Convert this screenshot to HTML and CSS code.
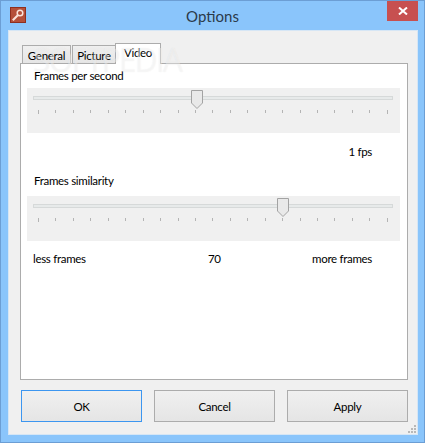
FILE: index.html
```html
<!DOCTYPE html>
<html lang="en">
<head>
  <meta charset="UTF-8" />
  <title>Options</title>
  <link rel="stylesheet" href="styles.css">
</head>
<body>
  <div class="window">
    <div class="titlebar">
      <svg class="app-icon" width="16" height="16" viewBox="0 0 16 16">
        <rect x="0.5" y="0.5" width="15" height="15" fill="#b5503a" stroke="#8f2f1f" />
        <circle cx="10" cy="6" r="2.8" fill="none" stroke="#fbe3da" stroke-width="1.5" />
        <path d="M7.8 8.2 L2.8 13.2" stroke="#fbe3da" stroke-width="2" />
      </svg>
      <div class="title">Options</div>
      <div class="close">
        <svg width="10" height="8" viewBox="0 0 10 8">
          <path d="M1 0.5 L9 7.5 M9 0.5 L1 7.5" stroke="#fff" stroke-width="2" />
        </svg>
      </div>
    </div>
    <div class="client">
      <div class="tabs">
        <div class="tab tab-general">General</div>
        <div class="tab tab-picture">Picture</div>
        <div class="tab tab-video">Video</div>
      </div>
      <div class="pane">
        <div class="label">Frames per second</div>
        <div class="slider">
          <div class="track"></div>
          <div class="scale">
            <div class="ticks">
              <i class="end"></i><i></i><i></i><i></i><i></i><i></i><i></i><i></i><i></i><i></i><i></i>
              <i></i><i></i><i></i><i></i><i></i><i></i><i></i><i></i><i></i><i class="end"></i>
            </div>
            <svg class="thumb" style="left: 45.4%" width="12" height="19" viewBox="0 0 12 19">
              <path d="M0.5 0.5 H11.5 V13 L6 18.5 L0.5 13 Z" fill="#e9e9e9" stroke="#a3a3a3" />
            </svg>
          </div>
        </div>
        <div class="fps">1 fps</div>
        <div class="label label-similarity">Frames similarity</div>
        <div class="slider slider-lower">
          <div class="track"></div>
          <div class="scale">
            <div class="ticks">
              <i class="end"></i><i></i><i></i><i></i><i></i><i></i><i></i><i></i><i></i><i></i><i></i>
              <i></i><i></i><i></i><i></i><i></i><i></i><i></i><i></i><i></i><i class="end"></i>
            </div>
            <svg class="thumb" style="left: 70%" width="12" height="19" viewBox="0 0 12 19">
              <path d="M0.5 0.5 H11.5 V13 L6 18.5 L0.5 13 Z" fill="#e9e9e9" stroke="#a3a3a3" />
            </svg>
          </div>
        </div>
        <div class="range-row">
          <span>less frames</span>
          <span>70</span>
          <span>more frames</span>
        </div>
      </div>
      <div class="buttons">
        <button class="focused">OK</button>
        <button>Cancel</button>
        <button>Apply</button>
      </div>
      <svg class="grip" width="9" height="9" viewBox="0 0 9 9" fill="#b8b8b8">
        <rect x="6" y="0" width="2" height="2" />
        <rect x="3" y="3" width="2" height="2" />
        <rect x="6" y="3" width="2" height="2" />
        <rect x="0" y="6" width="2" height="2" />
        <rect x="3" y="6" width="2" height="2" />
        <rect x="6" y="6" width="2" height="2" />
      </svg>
      <div class="watermark">SOFTPEDIA</div>
    </div>
  </div>
</body>
</html>
```

FILE: styles.css
```css
* {
  box-sizing: border-box;
}
html, body {
  margin: 0;
  padding: 0;
}
body {
  font-family: Lato, "Open Sans", Arial, sans-serif;
  font-size: 11.5px;
  letter-spacing: -0.3px;
  color: #000;
  background: #8ac5fb;
}
.window {
  width: 425px;
  height: 443px;
  border: 1px solid #6c9ed4;
  background: #8ac5fb;
  display: flex;
  flex-direction: column;
  overflow: hidden;
}
.titlebar {
  height: 29px;
  flex: none;
  position: relative;
  display: flex;
  justify-content: center;
  align-items: center;
}
.app-icon {
  position: absolute;
  left: 9px;
  top: 6px;
}
.title {
  font-size: 15px;
  letter-spacing: 0;
  color: #2b3a4a;
}
.close {
  position: absolute;
  left: 386px;
  top: 0;
  width: 31px;
  height: 20px;
  background: #c75050;
  display: flex;
  align-items: center;
  justify-content: center;
}
.client {
  position: relative;
  flex: 1;
  margin: 0 6px 7px 7px;
  padding: 11px 9px 0 11px;
  background: #f0f0f0;
  border: 1px solid #d6e6f5;
}
.tabs {
  display: flex;
  align-items: flex-end;
  height: 21px;
  position: relative;
  z-index: 1;
  margin-left: 2px;
}
.tab {
  height: 18px;
  padding-top: 1px;
  border: 1px solid #acacac;
  border-bottom: none;
  background: linear-gradient(#f0f0f0, #e5e5e5);
  display: flex;
  align-items: center;
  justify-content: center;
}
.tab-general {
  width: 49px;
}
.tab-picture {
  width: 44px;
  margin-left: 1px;
}
.tab-video {
  width: 46px;
  height: 21px;
  margin-left: -1px;
  margin-bottom: -1px;
  background: #fff;
  padding-top: 0;
  padding-bottom: 3px;
}
.pane {
  width: 388px;
  height: 317px;
  background: #fff;
  border: 1px solid #acacac;
  padding: 3px 7px 0 6px;
}
.label {
  height: 16px;
  line-height: 18px;
  padding-left: 7px;
}
.label-similarity {
  margin-top: 13px;
}
.slider {
  margin-top: 5px;
  height: 45px;
  background: #f0f0f0;
  padding: 8px 7px 0 6px;
}
.slider-lower {
  margin-top: 8px;
}
.track {
  height: 4px;
  background: #e7eaea;
  border: 1px solid #d6d9d9;
}
.scale {
  position: relative;
  margin: 0 5px;
}
.ticks {
  display: flex;
  justify-content: space-between;
  align-items: flex-start;
  padding-top: 10px;
}
.ticks i {
  display: block;
  width: 1px;
  height: 3px;
  background: #b4b4b4;
}
.ticks i.end {
  height: 4px;
}
.thumb {
  position: absolute;
  top: -10px;
  transform: translateX(-50%);
}
.fps {
  margin-top: 10px;
  height: 16px;
  line-height: 18px;
  text-align: right;
  padding-right: 28px;
}
.range-row {
  margin-top: 9px;
  height: 16px;
  line-height: 18px;
  padding: 0 28px 0 6px;
  display: grid;
  grid-template-columns: 175px 1fr auto;
}
.buttons {
  display: flex;
  gap: 12px;
  margin-top: 10px;
  margin-left: 1px;
}
button {
  width: 121px;
  height: 32px;
  flex: none;
  padding: 0;
  font-family: inherit;
  font-size: 11.5px;
  letter-spacing: inherit;
  color: #000;
  border: 1px solid #acacac;
  background: linear-gradient(#f0f0f0, #e5e5e5);
}
button.focused {
  border-color: #3c96f0;
}
.grip {
  position: absolute;
  right: 0;
  bottom: 0;
}
.watermark {
  position: absolute;
  left: 24px;
  top: 7px;
  font-family: "Open Sans", sans-serif;
  font-size: 32px;
  letter-spacing: -2px;
  color: rgba(255, 255, 255, 0.4);
  text-shadow: 0 0 1px rgba(120, 120, 120, 0.12);
  pointer-events: none;
  z-index: 2;
}
```
